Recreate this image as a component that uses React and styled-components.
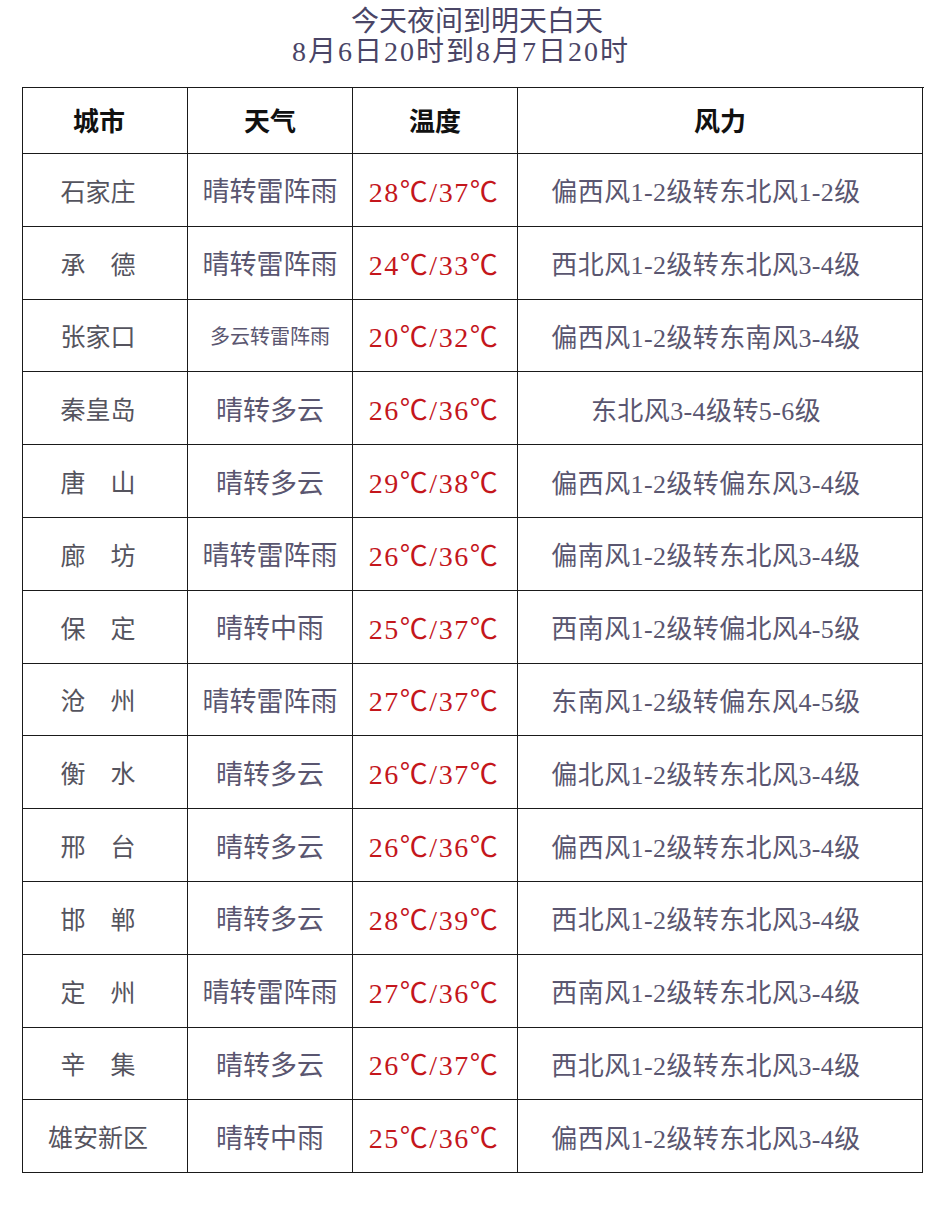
import React from "react";
import styled, { createGlobalStyle } from "styled-components";

const Global = createGlobalStyle`
  html, body { margin: 0; padding: 0; background: #fff; }
  body { font-family: "Liberation Serif", "Noto Sans CJK SC", serif; }
`;

const Page = styled.div`
  width: 942px;
  height: 1218px;
  background: #fff;
  display: flex;
  flex-direction: column;
  align-items: stretch;
`;

const Title = styled.div`
  padding-top: 8px;
  display: flex;
  flex-direction: column;
  align-items: center;
  color: #4a4566;
  font-family: "Liberation Serif", "Noto Sans CJK SC", serif;
  font-size: 28px;
  line-height: 28px;
`;

const TitleLine = styled.div`
  transform: translate(${(p) => p.$shift || 0}px, ${(p) => p.$dy || 0}px);
  letter-spacing: ${(p) => p.$ls || 0}px;
  white-space: nowrap;
`;

const Table = styled.div`
  margin-top: 23px;
  margin-left: 22px;
  width: 901px;
  display: grid;
  grid-template-columns: 165px 165px 165px 405px;
  grid-template-rows: 66px;
  grid-auto-rows: 72.8px;
  border-top: 1px solid #1a1a1a;
  border-left: 1px solid #1a1a1a;
`;

const Cell = styled.div`
  border-right: 1px solid #1a1a1a;
  border-bottom: 1px solid #1a1a1a;
  display: flex;
  align-items: center;
  justify-content: center;
  white-space: pre;
  font-family: "Liberation Serif", "Noto Sans CJK SC", serif;
  font-size: 26px;
  color: #5a5670;
  padding-right: ${(p) => p.$pr || 0}px;
  box-sizing: border-box;
`;

const HeadCell = styled(Cell)`
  color: #111;
  font-weight: 700;
  font-size: 26px;
  padding-bottom: 2px;
`;

const CityCell = styled(Cell)`
  color: #55545e;
  font-size: 25px;
`;

const WeatherCell = styled(Cell)`
  font-size: ${(p) => (p.$small ? "20px" : "27px")};
  color: #5a5670;
`;

const TempCell = styled(Cell)`
  color: #c4161c;
  font-size: 28px;
  letter-spacing: 1.5px;
`;

const WindCell = styled(Cell)`
  color: #5a5670;
  font-size: 26px;
  letter-spacing: 0.4px;
`;

const rows = [
  ["石家庄", "晴转雷阵雨", "28℃/37℃", "偏西风1-2级转东北风1-2级"],
  ["承　德", "晴转雷阵雨", "24℃/33℃", "西北风1-2级转东北风3-4级"],
  ["张家口", "多云转雷阵雨", "20℃/32℃", "偏西风1-2级转东南风3-4级"],
  ["秦皇岛", "晴转多云", "26℃/36℃", "东北风3-4级转5-6级"],
  ["唐　山", "晴转多云", "29℃/38℃", "偏西风1-2级转偏东风3-4级"],
  ["廊　坊", "晴转雷阵雨", "26℃/36℃", "偏南风1-2级转东北风3-4级"],
  ["保　定", "晴转中雨", "25℃/37℃", "西南风1-2级转偏北风4-5级"],
  ["沧　州", "晴转雷阵雨", "27℃/37℃", "东南风1-2级转偏东风4-5级"],
  ["衡　水", "晴转多云", "26℃/37℃", "偏北风1-2级转东北风3-4级"],
  ["邢　台", "晴转多云", "26℃/36℃", "偏西风1-2级转东北风3-4级"],
  ["邯　郸", "晴转多云", "28℃/39℃", "西北风1-2级转东北风3-4级"],
  ["定　州", "晴转雷阵雨", "27℃/36℃", "西南风1-2级转东北风3-4级"],
  ["辛　集", "晴转多云", "26℃/37℃", "西北风1-2级转东北风3-4级"],
  ["雄安新区", "晴转中雨", "25℃/36℃", "偏西风1-2级转东北风3-4级"],
];

export default function App() {
  return (
    <>
      <Global />
      <Page>
        <Title>
          <TitleLine $shift={6}>今天夜间到明天白天</TitleLine>
          <TitleLine $shift={-10} $dy={2} $ls={2}>8月6日20时到8月7日20时</TitleLine>
        </Title>
        <Table>
          <HeadCell $pr={12}>城市</HeadCell>
          <HeadCell>天气</HeadCell>
          <HeadCell>温度</HeadCell>
          <HeadCell>风力</HeadCell>
          {rows.map((r, i) => (
            <React.Fragment key={i}>
              <CityCell $pr={14}>{r[0]}</CityCell>
              <WeatherCell $small={r[1].length > 5}>{r[1]}</WeatherCell>
              <TempCell $pr={2}>{r[2]}</TempCell>
              <WindCell $pr={28}>{r[3]}</WindCell>
            </React.Fragment>
          ))}
        </Table>
      </Page>
    </>
  );
}
